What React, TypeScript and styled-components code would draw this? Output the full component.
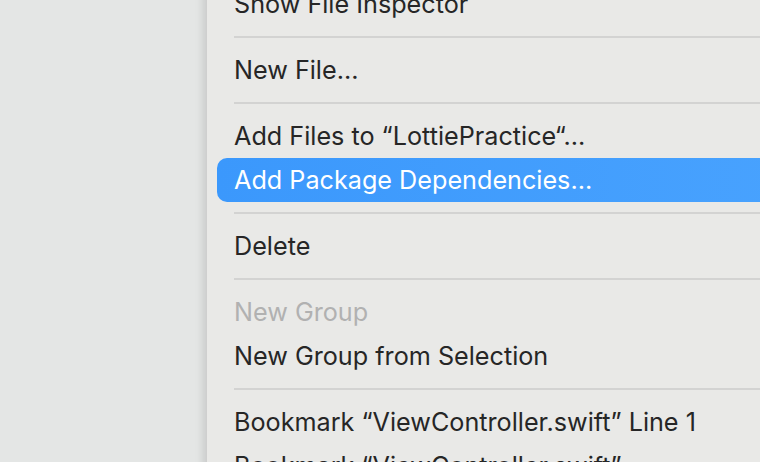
import * as React from 'react';
import styled, { createGlobalStyle } from 'styled-components';

type Entry =
  | { kind: 'item'; label: string; selected?: boolean; disabled?: boolean }
  | { kind: 'separator' };

const entries: Entry[] = [
  { kind: 'item', label: 'Show File Inspector' },
  { kind: 'separator' },
  { kind: 'item', label: 'New File…' },
  { kind: 'separator' },
  { kind: 'item', label: 'Add Files to “LottiePractice“…' },
  { kind: 'item', label: 'Add Package Dependencies…', selected: true },
  { kind: 'separator' },
  { kind: 'item', label: 'Delete' },
  { kind: 'separator' },
  { kind: 'item', label: 'New Group', disabled: true },
  { kind: 'item', label: 'New Group from Selection' },
  { kind: 'separator' },
  { kind: 'item', label: 'Bookmark “ViewController.swift” Line 1' },
  { kind: 'item', label: 'Bookmark “ViewController.swift”' },
];

const GlobalStyle = createGlobalStyle`
  html, body {
    margin: 0;
    padding: 0;
    width: 760px;
    height: 462px;
    overflow: hidden;
    background: #e4e6e5;
  }
`;

export default function App() {
  return (
    <>
      <GlobalStyle />
      <Desktop>
        <Menu>
          {entries.map((entry, i) =>
            entry.kind === 'separator' ? (
              <Separator key={i} />
            ) : (
              <Item key={i} $selected={entry.selected} $disabled={entry.disabled}>
                {entry.label}
              </Item>
            )
          )}
        </Menu>
      </Desktop>
    </>
  );
}

const Desktop = styled.div`
  display: flex;
  align-items: flex-start;
  width: 760px;
  height: 462px;
  padding-left: 206px;
  box-sizing: border-box;
  overflow: hidden;
`;

const Menu = styled.div`
  display: flex;
  flex-direction: column;
  flex: 1;
  margin-top: -18px;
  margin-right: -40px;
  padding: 0 10px 40px;
  background: #e9e9e7;
  border-left: 1px solid #cfcfcf;
  box-shadow: -3px 0 8px rgba(0, 0, 0, 0.12);
  font-family: Inter, 'Liberation Sans', sans-serif;
  font-size: 25.2px;
`;

const Item = styled.div<{ $selected?: boolean; $disabled?: boolean }>`
  display: flex;
  flex-shrink: 0;
  align-items: center;
  height: 44px;
  padding-left: 17px;
  border-radius: 10px;
  white-space: nowrap;
  color: ${p => (p.$selected ? '#ffffff' : p.$disabled ? '#b1b1b1' : '#262626')};
  background: ${p => (p.$selected ? 'linear-gradient(90deg, #3b98fc, #48a2fe)' : 'transparent')};
`;

const Separator = styled.div`
  flex-shrink: 0;
  height: 2px;
  margin: 10px 0 10px 17px;
  background: #d3d3d2;
`;
